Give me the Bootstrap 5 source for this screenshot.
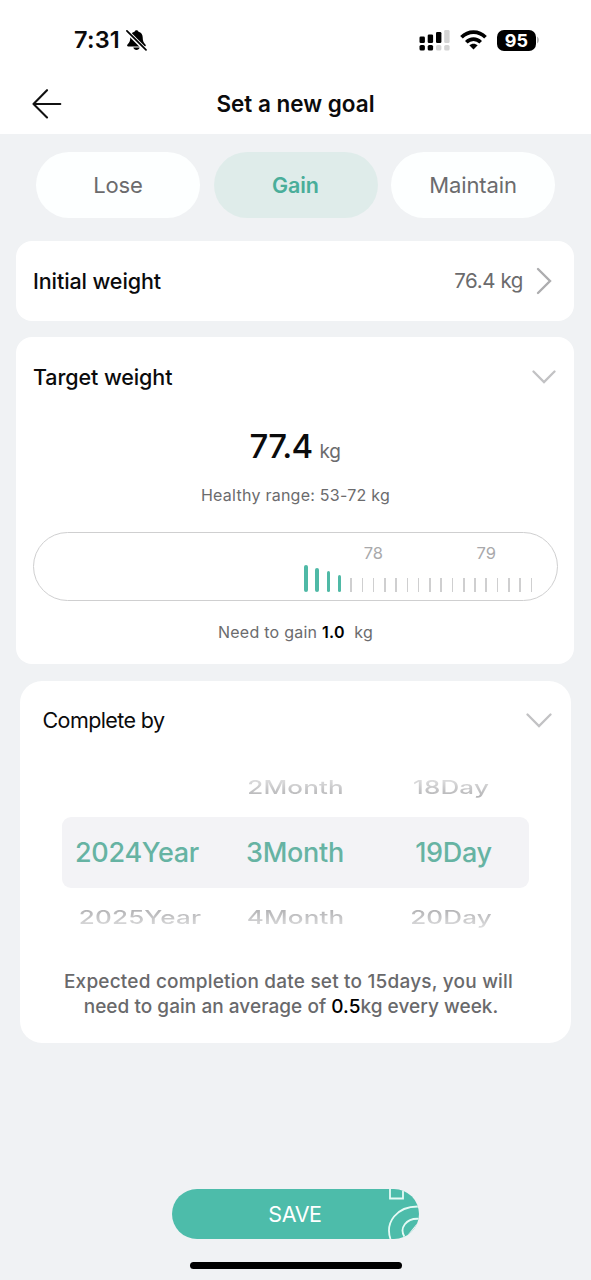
<!DOCTYPE html>
<html lang="en">
<head>
<meta charset="utf-8">
<meta name="viewport" content="width=device-width, initial-scale=1">
<title>Set a new goal</title>
<link href="https://cdn.jsdelivr.net/npm/bootstrap@5.3.0/dist/css/bootstrap.min.css" rel="stylesheet">
<style>
body{font-family:Inter,"Liberation Sans",sans-serif;background:#f0f2f4;color:#0b0b0c;width:591px;height:1280px;overflow:hidden;line-height:1}
svg{display:block;flex:none}
.t{white-space:nowrap;line-height:28px}
.top-area{height:134px}
.status-row{height:80px;padding:0 52px 0 74px}
.clock{font-size:23.5px;font-weight:600;letter-spacing:.2px}
.batt{width:39px;height:21px;border-radius:7px;background:#000;color:#fff;font-size:18px;font-weight:700;line-height:21px;letter-spacing:.2px}
.title-row{height:48px;padding-left:32px;padding-right:32px}
.title-text{font-size:22.5px;font-weight:600;letter-spacing:0}
.tabs{padding:18px 36px 0;height:107px}
.pill{width:164px;height:66px;border-radius:33px;background:#fdffff;color:#6b6b6d;font-size:22px;letter-spacing:-.1px}
.pill.on{background:#dfecea;color:#4aae9a;font-weight:600;font-size:21.5px;letter-spacing:-.1px}
.panel{background:#fff;border-radius:16px;margin:0 17px 0 16px}
.head{font-size:21.5px;font-weight:500;letter-spacing:-.1px}
.grey{color:#6b6b6d}
.ruler{height:69px;border:1.5px solid #cfcfd0;border-radius:35px;margin:0 16px 0 17px}
.scale{padding-left:283px}
.scale-label{width:112.8px;color:#a9a9ab;font-size:16.5px;line-height:20px;letter-spacing:0}
.tick-row{height:28px;padding-left:266.4px}
.tick{width:11.28px;height:14px}
.tick i{display:block;width:1.6px;height:100%;background:#cfcfd0}
.tick.a i{background:#4fb9a6;border-radius:2px}
.h27{height:27px}.h24{height:24px}.h20{height:21px}.h17{height:17px}
.h27 i{width:4.6px!important}.h24 i,.h20 i{width:3.8px!important}.h17 i{width:3.2px!important}
.by{border-radius:22px;margin:17px 20px 0;height:362px}
.wheel{width:467px;margin:0 auto}
.side{display:grid;grid-template-columns:156px 155px 156px;height:60px}
.side span,.sel span{white-space:nowrap;justify-self:center}
.side span{font-size:26px;line-height:32px;letter-spacing:.15px;font-weight:500;color:transparent;background:linear-gradient(#dcdcdd 15%,#b4b4b6 90%);background-clip:text;-webkit-background-clip:text;transform:scaleY(.7)}
.side.low span{background-image:linear-gradient(#b4b4b6 15%,#dcdcdd 90%)}
.side.high{padding-top:2px}
.sel{display:grid;grid-template-columns:150px 166px 151px;height:71px;background:#f3f3f6;border-radius:9px;color:#66b3a3;font-size:27px;font-weight:500;letter-spacing:-.3px}
.note{font-size:19px;font-weight:500;line-height:25px;color:#69696b}
.l1{letter-spacing:.2px;margin-right:5px}
.l2{letter-spacing:.04px}
.save{width:247px;height:50px;border-radius:25px;background:#4dbcaa;color:#fff;font-size:21.5px;letter-spacing:-.4px;overflow:hidden;margin:146px auto 0 172px;padding-right:1px}
.deco{right:0;top:0}
.homebar{width:212px;height:7px;border-radius:4px;background:#000;margin:23px auto 0 190px}
</style>
</head>
<body>
<header class="top-area bg-white">
  <div class="status-row d-flex align-items-center justify-content-between">
    <div class="d-flex align-items-center" style="gap:6px">
      <span class="t clock">7:31</span>
      <svg width="21" height="22" viewBox="0 0 21 22"><path d="M10.500 1.200c1 0 1.800.6 2 1.500 2.800.8 4.200 2.900 4.200 5.500 0 3.500.8 5.300 2.700 7.300.8.9.4 1.900-.7 1.900H2.300c-1.200 0-1.600-1-.8-1.900 2-2 2.800-3.800 2.800-7.300 0-2.600 1.400-4.700 4.200-5.500.2-.9 1-1.500 2-1.500z"/><path d="M7.300 18.600h6.400c-.4 1.400-1.600 2.400-3.200 2.400s-2.800-1-3.200-2.400z"/><path d="M0 1.400 20.500 21.900" stroke="#fff" stroke-width="4.200"/><path d="M.9 1.800 20 20.900" stroke="#000" stroke-width="1.700" stroke-linecap="round"/></svg>
    </div>
    <div class="d-flex align-items-center">
      <svg width="31" height="21" viewBox="0 0 31 21"><g fill="#000"><rect x=".5" y="6.500" width="5.400" height="6.500" rx="1.300"/><rect x="8.700" y="4.500" width="5.400" height="8.500" rx="1.300"/><rect x="17" y="2" width="5.400" height="11" rx="1.300"/><rect x=".5" y="15" width="5.400" height="5.500" rx="1.600"/><rect x="8.700" y="15" width="5.400" height="5.500" rx="1.600"/></g><g fill="#d4d4d4"><rect x="25.200" y="0" width="5.400" height="13" rx="1.300"/><rect x="17" y="15" width="5.400" height="5.500" rx="1.600"/><rect x="25.200" y="15" width="5.400" height="5.500" rx="1.600"/></g></svg>
      <svg width="27" height="20" viewBox="0 0 27 20" style="margin-left:10px"><g fill="none" stroke="#000" stroke-width="3.700"><path d="M1.500 7.300c6.800-6.900 17.200-6.900 24 0"/><path d="M6.300 12.200c4.200-4.100 10.200-4.100 14.400 0"/></g><path d="M9.300 15.300c2.500-2.200 5.900-2.200 8.400 0l-4.200 4.200z"/></svg>
      <span class="batt text-center" style="margin-left:10px">95</span>
      <svg width="2" height="8" viewBox="0 0 2 8" style="margin-left:1px"><path d="M0 .5c2.500 1.500 2.500 5.500 0 7z" fill="#b5b5b5"/></svg>
    </div>
  </div>
  <div class="title-row d-flex align-items-center justify-content-between">
    <svg width="30" height="30" viewBox="0 0 30 30"><path d="M28.300 15H1.500M15 1.200 1.500 15 15 28.500" fill="none" stroke="#111" stroke-width="2.100" stroke-linecap="round" stroke-linejoin="round"/></svg>
    <span class="t title-text">Set a new goal</span>
    <span style="width:30px"></span>
  </div>
</header>
<main>
  <div class="tabs d-flex justify-content-between">
    <div class="pill d-flex align-items-center justify-content-center"><span class="t">Lose</span></div>
    <div class="pill on d-flex align-items-center justify-content-center"><span class="t">Gain</span></div>
    <div class="pill d-flex align-items-center justify-content-center"><span class="t">Maintain</span></div>
  </div>

  <section class="panel d-flex align-items-center justify-content-between" style="height:80px;padding:0 22px 0 17px">
    <span class="t head">Initial weight</span>
    <span class="d-flex align-items-center" style="gap:13px"><span class="t grey" style="font-size:20.5px;letter-spacing:-.4px">76.4 kg</span>
    <svg width="16" height="28" viewBox="0 0 16 28"><path d="M2 2 14 14 2 26" fill="none" stroke="#adadaf" stroke-width="2.400" stroke-linecap="round"/></svg></span>
  </section>

  <section class="panel" style="height:327px;margin-top:16px;padding-top:26px">
    <div class="d-flex align-items-center justify-content-between" style="padding:0 18px 0 17px">
      <span class="t head">Target weight</span>
      <svg width="24" height="14" viewBox="0 0 24 14"><path d="M1.500 1.500 12 12 22.500 1.500" fill="none" stroke="#c2c2c4" stroke-width="2.300" stroke-linecap="round"/></svg>
    </div>
    <div class="d-flex justify-content-center align-items-baseline" style="gap:7px;margin-top:35px;height:40px">
      <span class="t value" style="font-size:33px;font-weight:500;line-height:40px;letter-spacing:-.7px">77.4</span><span class="t grey" style="font-size:19px;letter-spacing:-.3px">kg</span>
    </div>
    <div class="t grey text-center" style="font-size:16px;letter-spacing:.25px;margin-top:15px;padding-left:1px">Healthy range: 53-72 kg</div>
    <div class="ruler" style="margin-top:23px;padding-top:10px">
      <div class="scale d-flex text-center"><span class="scale-label">78</span><span class="scale-label">79</span></div>
      <div class="tick-row d-flex align-items-end" id="ticks" style="margin-top:1px"></div>
    </div>
    <div class="t grey text-center" style="font-size:16px;letter-spacing:.25px;margin-top:17px;padding-left:1px">Need to gain <span class="text-black fw-semibold">1.0</span>&nbsp; kg</div>
  </section>

  <section class="panel by">
    <div class="d-flex align-items-center justify-content-between" style="padding:25px 19px 0 22.5px">
      <span class="t head" style="font-weight:400;letter-spacing:-.6px">Complete by</span>
      <svg width="26" height="15" viewBox="0 0 26 15"><path d="M1.500 1.500 13 13 24.500 1.500" fill="none" stroke="#c2c2c4" stroke-width="2.300" stroke-linecap="round"/></svg>
    </div>
    <div class="wheel" style="margin-top:23px">
      <div class="side high align-items-center"><span></span><span>2Month</span><span>18Day</span></div>
      <div class="sel align-items-center"><span>2024Year</span><span>3Month</span><span>19Day</span></div>
      <div class="side low align-items-center"><span>2025Year</span><span>4Month</span><span>20Day</span></div>
    </div>
    <div class="note text-center" style="margin-top:21px;padding-right:9px"><span class="t l1" style="line-height:25px">Expected completion date set to 15days, you will</span><br><span class="t l2" style="line-height:25px">need to gain an average of <span class="text-black">0.5</span>kg every week.</span></div>
  </section>

  <div class="save position-relative d-flex align-items-center justify-content-center"><span class="t">SAVE</span>
    <svg class="deco position-absolute" width="35" height="50" viewBox="0 0 35 50"><g fill="none" stroke="#e6faf5" stroke-width="1.800"><path d="M6 0v9.500h13V0"/><path d="M6.500 50C1 34 12 17 35 17.500"/><path d="M20.500 48C15 39 22 29 35 29.800"/></g><path d="M35 32 22 48l-2 2h15z" fill="#f0f2f4"/></svg>
  </div>
  <div class="homebar"></div>
</main>
<script src="https://cdn.jsdelivr.net/npm/bootstrap@5.3.0/dist/js/bootstrap.bundle.min.js"></script>
<script>
const tall = ['a h27', 'a h24', 'a h20', 'a h17'];
document.getElementById('ticks').innerHTML = Array.from({length: 21}, (_, i) =>
  `<span class="tick d-flex justify-content-center ${tall[i] || ''}"><i></i></span>`).join('');
</script>
</body>
</html>
